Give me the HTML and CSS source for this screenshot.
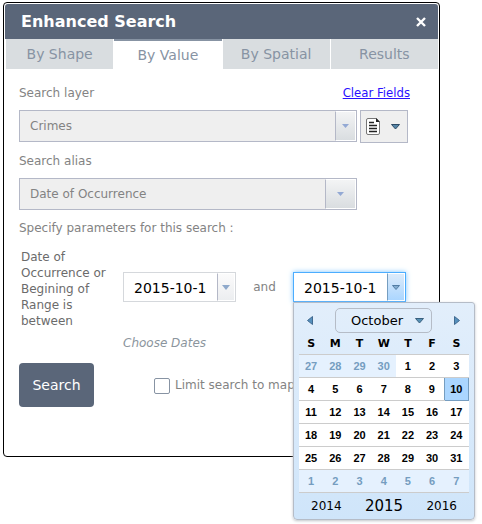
FILE: index.html
```html
<!DOCTYPE html>
<html lang="en">
<head>
<meta charset="utf-8">
<title>Enhanced Search</title>
<link rel="stylesheet" href="styles.css">
</head>
<body>
<main class="panel">
  <header class="panel-header">
    <h1>Enhanced Search</h1>
    <button class="close" type="button" aria-label="Close">
      <svg width="10" height="10" viewBox="0 0 10 10"><path d="M1 1 9 9M9 1 1 9" stroke="#fff" stroke-width="2.4"/></svg>
    </button>
  </header>
  <nav class="tabs">
    <button class="tab" type="button">By Shape</button>
    <button class="tab active" type="button">By Value</button>
    <button class="tab" type="button">By Spatial</button>
    <button class="tab" type="button">Results</button>
  </nav>
  <form class="form">
    <div class="label-row">
      <label for="layer">Search layer</label>
      <a class="clear" href="#">Clear Fields</a>
    </div>
    <div class="layer-row">
      <div class="select">
        <select id="layer"><option>Crimes</option></select>
        <span class="arrow"><svg width="7" height="4" viewBox="0 0 7 4"><path d="M0 0h7L3.500 4z" fill="#93a9d4"/></svg></span>
      </div>
      <button class="doc" type="button" aria-label="Layer options">
        <svg width="14" height="17" viewBox="0 0 14 17"><path d="M2 .5h8.500L13.500 4v11q0 1.500-1.500 1.500H2Q.5 16.500.5 15V2Q.5.5 2 .5z" fill="#fff" stroke="#777"/><path d="M10 0v4h4z" fill="#222"/><path d="M3 4.500h5M3 7.500h8M3 10.500h8M3 13.500h8" stroke="#222" stroke-width="1.300"/></svg>
        <svg width="9" height="6" viewBox="0 0 9 6"><path d="M.5.5h8L4.500 5z" fill="#5686a8" stroke="#2c4b66"/></svg>
      </button>
    </div>
    <label class="line" for="alias">Search alias</label>
    <div class="select wide-arrow">
      <select id="alias"><option>Date of Occurrence</option></select>
      <span class="arrow"><svg width="7" height="4" viewBox="0 0 7 4"><path d="M0 0h7L3.500 4z" fill="#93a9d4"/></svg></span>
    </div>
    <p class="line">Specify parameters for this search :</p>
    <div class="dates">
      <label class="range" for="from">Date of Occurrence or Begining of Range is between</label>
      <div class="date">
        <input id="from" type="text" value="2015-10-1">
        <button type="button" aria-label="Open calendar"><svg width="8" height="5" viewBox="0 0 8 5"><path d="M0 0h8L4 5z" fill="#8fa9cb"/></svg></button>
      </div>
      <label class="and" for="to">and</label>
      <div class="date focused">
        <input id="to" type="text" value="2015-10-1">
        <button type="button" aria-label="Open calendar"><svg width="8" height="5" viewBox="0 0 8 5"><path d="M.5.5h7L4 4.500z" fill="#83acd0" stroke="#527da4"/></svg></button>
        <div class="calendar">
          <div class="month-row">
            <button class="nav" type="button" aria-label="Previous month"><svg width="6" height="9" viewBox="0 0 6 9"><path d="M5.500.5v8L.5 4.500z" fill="#5590bd" stroke="#426a90"/></svg></button>
            <button class="month" type="button">October <svg width="9" height="6" viewBox="0 0 9 6"><path d="M.5.5h8L4.500 5z" fill="#5590b5" stroke="#3a607f"/></svg></button>
            <button class="nav" type="button" aria-label="Next month"><svg width="6" height="9" viewBox="0 0 6 9"><path d="M.5.5v8l5-4z" fill="#5590bd" stroke="#426a90"/></svg></button>
          </div>
          <table>
            <thead><tr><th>S</th><th>M</th><th>T</th><th>W</th><th>T</th><th>F</th><th>S</th></tr></thead>
            <tbody>
              <tr><td class="other">27</td><td class="other">28</td><td class="other">29</td><td class="other">30</td><td>1</td><td>2</td><td>3</td></tr>
              <tr><td>4</td><td>5</td><td>6</td><td>7</td><td>8</td><td>9</td><td class="selected">10</td></tr>
              <tr><td>11</td><td>12</td><td>13</td><td>14</td><td>15</td><td>16</td><td>17</td></tr>
              <tr><td>18</td><td>19</td><td>20</td><td>21</td><td>22</td><td>23</td><td>24</td></tr>
              <tr><td>25</td><td>26</td><td>27</td><td>28</td><td>29</td><td>30</td><td>31</td></tr>
              <tr><td class="other">1</td><td class="other">2</td><td class="other">3</td><td class="other">4</td><td class="other">5</td><td class="other">6</td><td class="other">7</td></tr>
            </tbody>
          </table>
          <div class="years">
            <button type="button">2014</button>
            <button class="current" type="button">2015</button>
            <button type="button">2016</button>
          </div>
        </div>
      </div>
    </div>
    <p class="hint">Choose Dates</p>
    <div class="actions">
      <button class="search" type="button">Search</button>
      <input id="limit" type="checkbox">
      <label for="limit">Limit search to map</label>
    </div>
  </form>
</main>
</body>
</html>
```
FILE: styles.css
```css
* { box-sizing: border-box; }

body {
  min-height: 100vh;
  margin: 0;
  padding: 2px 42px 2px 3px;
  background: #fff;
  color: #838383;
  font: 12px/16px "DejaVu Sans", sans-serif;
}

button, input, select {
  font: inherit;
  color: inherit;
  margin: 0;
  padding: 0;
}

button {
  display: flex;
  align-items: center;
  justify-content: center;
  background: none;
  border: 0;
}

svg { display: block; flex: none; }

p { margin: 0; }

.panel {
  padding: 1px;
  border: 1px solid #000;
  border-radius: 4px;
}

.panel-header {
  display: flex;
  align-items: center;
  justify-content: space-between;
  height: 35px;
  padding: 0 12px 0 16px;
  background: #5a6679;
  border-radius: 3px 3px 0 0;
  color: #fff;
}

.panel-header h1 {
  margin: 0;
  font-size: 16px;
  line-height: 20px;
}

.tabs {
  display: grid;
  grid-template-columns: repeat(4, 1fr);
  gap: 1px;
  height: 30px;
  padding-left: 1px;
}

.tab {
  background: #d9dde0;
  color: #8793a3;
  font-size: 14px;
}

.tab.active {
  background: #fff;
  border-top: 2px solid #8793a3;
}

.form { padding: 16px 14px 48px; }

.label-row {
  display: flex;
  justify-content: space-between;
  padding-right: 14px;
}

.clear {
  color: #2a10ff;
  font-family: "DejaVu Sans Condensed", "DejaVu Sans", sans-serif;
  font-size: 13px;
}

.layer-row {
  display: flex;
  gap: 3px;
  margin: 9px 0;
  padding-right: 16px;
}

.select {
  display: flex;
  flex: 1;
  height: 32px;
  border: 1px solid #b4b8c7;
  background: #efefef;
}

.select select {
  flex: 1;
  appearance: none;
  padding-left: 10px;
  background: none;
  border: 0;
}

.arrow {
  display: flex;
  align-items: center;
  justify-content: center;
  width: 21px;
  border: 1px solid #fff;
  border-left-color: #b4b8c7;
  background: linear-gradient(#f3f4f5, #d9dde0);
}

.doc {
  gap: 11px;
  width: 48px;
  height: 33px;
  padding-right: 2px;
  border: 1px solid #b4b8c7;
  background: #efefef;
}

.line {
  display: block;
  padding-top: 1px;
}

.wide-arrow { margin: 9px 67px 9px 0; }
.wide-arrow .arrow { width: 31px; }

.dates {
  display: flex;
  align-items: center;
  margin-top: 13px;
  padding-left: 2px;
}

.range {
  width: 102px;
  color: #6b6b6b;
}

.date {
  position: relative;
  display: flex;
  width: 113px;
  height: 30px;
  margin-bottom: 4px;
  border: 1px solid #d5d8dc;
  background: #fff;
}

.date input {
  flex: 1;
  min-width: 0;
  padding: 2px 8px 0 10px;
  border: 0;
  outline: 0;
  background: #fff;
  color: #000;
  font-size: 14px;
}

.date > button {
  width: 18px;
  border: 1px solid #fff;
  border-left-color: #b4b8c7;
  background: linear-gradient(#fbfbfb, #eceef0);
}

.date.focused {
  border-color: #4badff;
  box-shadow: 0 0 5px #7cc5ff;
}

.date.focused > button {
  border-left-color: #759dc0;
  background: linear-gradient(#dcebfa, #abd6ff);
}

.and {
  width: 57px;
  margin-bottom: 4px;
  text-align: center;
}

.calendar {
  position: absolute;
  top: 29px;
  left: -1px;
  width: 182px;
  padding: 5px 5px 0;
  border: 1px solid #b5bcc7;
  border-radius: 0 3px 4px 4px;
  background: linear-gradient(#e2eefb, #cfe5fa);
  box-shadow: 0 1px 3px #c0c4c8;
  color: #000;
}

.month-row {
  display: flex;
  align-items: center;
  justify-content: space-between;
  padding: 0 9px 0 8px;
}

.month {
  gap: 12px;
  width: 97px;
  height: 25px;
  padding-left: 8px;
  border: 1px solid #b5bcc7;
  border-radius: 5px;
  font-size: 13px;
}

.calendar table {
  width: 100%;
  table-layout: fixed;
  border-collapse: collapse;
}

.calendar th {
  height: 21px;
  padding: 2px 0 0;
  font-size: 11px;
}

.calendar td {
  height: 23px;
  padding: 0;
  border-top: 1px solid #ccc;
  border-bottom: 1px solid #ccc;
  background: #fff;
  font: bold 11px/16px "Liberation Sans", sans-serif;
  text-align: center;
}

.calendar td.other {
  background: #e5f1fe;
  color: #759dc0;
}

.calendar td.selected {
  border: 1px solid #759dc0;
  background: #abd6ff;
}

.years {
  display: flex;
  align-items: center;
  justify-content: space-between;
  height: 26px;
  padding: 1px 12px 0;
}

.years button { font-size: 12px; }
.years .current { font-size: 15px; }

.hint {
  margin-top: 6px;
  padding-left: 104px;
  color: #8b959d;
  font-style: italic;
}

.actions {
  display: flex;
  align-items: center;
  margin-top: 12px;
}

.search {
  width: 75px;
  height: 44px;
  border-radius: 4px;
  background: #5a6679;
  color: #fff;
  font-size: 14px;
}

.actions input {
  appearance: none;
  width: 16px;
  height: 16px;
  margin: 2px 5px 0 60px;
  border: 1px solid #8793a3;
  border-radius: 2px;
  background: #fff;
}
```
